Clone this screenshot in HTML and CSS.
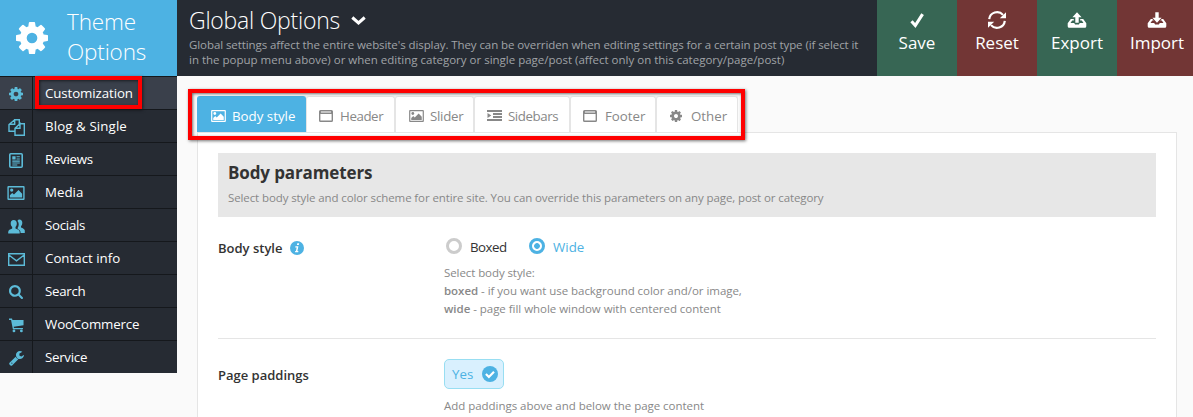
FILE: index.html
```html
<!DOCTYPE html>
<html lang="en">
<head>
<meta charset="utf-8">
<title>Theme Options</title>
<link rel="stylesheet" href="styles.css">
</head>
<body>
<svg class="defs" aria-hidden="true">
  <symbol id="cog" viewBox="128 128 1536 1536"><path d="M1152 896q0-106-75-181t-181-75-181 75-75 181 75 181 181 75 181-75 75-181zm512-109v222q0 12-8 23t-20 13l-185 28q-19 54-39 91 35 50 107 138 10 12 10 25t-9 23q-27 37-99 108t-94 71q-12 0-26-9l-138-108q-44 23-91 38-16 136-29 186-7 28-36 28h-222q-14 0-24.5-8.5t-11.5-21.5l-28-184q-49-16-90-37l-141 107q-10 9-25 9-14 0-25-11-126-114-165-168-7-10-7-23 0-12 8-23 15-21 51-66.5t54-70.5q-27-50-41-99l-183-27q-13-2-21-12.5t-8-23.5v-222q0-12 8-23t19-13l186-28q14-46 39-92-40-57-107-138-10-12-10-24 0-10 9-23 26-36 98.5-107.5t94.5-71.5q13 0 26 10l138 107q44-23 91-38 16-136 29-186 7-28 36-28h222q14 0 24.5 8.5t11.5 21.5l28 184q49 16 90 37l142-107q9-9 24-9 13 0 25 10 129 119 165 170 7 8 7 22 0 12-8 23-15 21-51 66.5t-54 70.5q26 50 41 98l183 28q13 2 21 12.5t8 23.5z"/></symbol>
  <symbol id="picture" viewBox="0 0 16 13"><path fill-rule="evenodd" d="M1 0h14a1 1 0 0 1 1 1v11a1 1 0 0 1-1 1H1a1 1 0 0 1-1-1V1a1 1 0 0 1 1-1zm.3 1.3v10.4h13.4V1.300z"/><circle cx="4" cy="3.800" r="1.500"/><path d="M2.300 10.700V8.600l2.200-2.100 1.600 1.500 4.200-4.200 3.400 3.500v3.400z"/></symbol>
  <symbol id="window" viewBox="0 0 14 12"><path fill-rule="evenodd" d="M1.500 0h11A1.500 1.500 0 0 1 14 1.500v9a1.500 1.500 0 0 1-1.500 1.500h-11A1.500 1.500 0 0 1 0 10.500v-9A1.500 1.500 0 0 1 1.500 0zM1.400 4v6.600h11.200V4zM2 1.500v1h10v-1z"/></symbol>
  <symbol id="indent" viewBox="0 0 15 11"><path d="M0 0h15v2H0zM6 3h9v2H6zM6 6h9v2H6zM0 9h15v2H0zM.5 3l3.800 2.500L.5 8z"/></symbol>
</svg>

<header class="topbar">
  <div class="brand">
    <svg class="brand-icon"><use href="#cog"/></svg>
    <div class="brand-name">Theme<br>Options</div>
  </div>
  <div class="heading">
    <h1>Global Options <svg class="chevron" viewBox="0 0 15 9"><path d="M1.300 1.500l6.200 5.400 6.200-5.400" fill="none" stroke="currentColor" stroke-width="3"/></svg></h1>
    <p><span class="snug">Global settings affect the entire website's display. They can be overriden when editing settings for a certain post type (if select it</span><br>in the popup menu above) or when editing category or single page/post (affect only on this category/page/post)</p>
  </div>
  <nav class="actions">
    <a class="action green"><svg viewBox="0 0 20 20"><path d="M4.500 11.300l3.800 4.200L15.600 4.200" fill="none" stroke="currentColor" stroke-width="3.100"/></svg><span>Save</span></a>
    <a class="action red"><svg viewBox="0 0 20 20"><path d="M2.200 9.200A7.900 7.900 0 0 1 16 4.900M17.800 10.800A7.900 7.900 0 0 1 4 15.100" fill="none" stroke="currentColor" stroke-width="2.200"/><path d="M19 2.200v6h-6.200zM1 17.800v-6h6.200z"/></svg><span>Reset</span></a>
    <a class="action green"><svg viewBox="0 0 20 20"><path d="M10 2.300l4.600 4.900h-2.900v5.500H8.300V7.200H5.400z"/><path d="M3.800 9h3v1.500H5.200L3.500 13h3.700l.9 1.600h3.800l.9-1.600h3.700l-1.700-2.500h-1.600V9h3l3.100 4.300v2.900a1.500 1.500 0 0 1-1.500 1.500H2.200a1.500 1.500 0 0 1-1.500-1.500v-2.900z"/></svg><span>Export</span></a>
    <a class="action red"><svg viewBox="0 0 20 20"><path d="M10 12.700l4.600-4.900h-2.900V2.300H8.300v5.500H5.400z"/><path d="M3.800 9h1.500l1.400 1.500H5.200L3.500 13h3.700l.9 1.600h3.800l.9-1.600h3.700l-1.700-2.500h-1.500L14.700 9h1.500l3.100 4.300v2.900a1.500 1.500 0 0 1-1.500 1.500H2.200a1.500 1.500 0 0 1-1.500-1.500v-2.900z"/></svg><span>Import</span></a>
  </nav>
</header>

<div class="body">
  <ul class="sidebar">
    <li class="current"><i><svg class="s14"><use href="#cog"/></svg></i><span class="tight-1">Customization</span><b class="mark"></b></li>
    <li><i><svg class="s17" viewBox="0 0 17 17"><path d="M6.700 4.200V.7h4.600v4.500M6.700.7L1 5.500v6.800h5.500M6.700.9v4.300H1.200M12 4.700h4.300V16.300H7V9.300l5-4.600v4.600H7.200M11.300 5V.7" fill="none" stroke="currentColor" stroke-width="1.400"/></svg></i><span class="loose">Blog &amp; Single</span></li>
    <li><i><svg class="s15" viewBox="0 0 14 15"><rect x=".8" y=".8" width="12.400" height="13.400" rx="1" fill="none" stroke="currentColor" stroke-width="1.600"/><path d="M3.300 3.200h3.300v3.300H3.300zM7.500 3.200h3.300v1H7.500zM7.500 5.400h3.300v1H7.500zM3.300 7.600h7.500v1.100H3.300zM3.300 9.600h7.500v1H3.300zM3.300 11.500h5v1h-5z"/></svg></i><span class="tight-3">Reviews</span></li>
    <li><i><svg class="pic18"><use href="#picture"/></svg></i><span>Media</span></li>
    <li><i><svg class="s17" viewBox="0 0 17 15"><path d="M11.300.5c2 0 3 1.300 3 3.200 0 1.500-.5 2.700-1.300 3.500v1.300c1.900.8 3.500 1.300 3.800 3.100V14h-4.200c0-2-.8-2.900-2.900-3.900V8.700c.6-.9 1-2 1-3.200 0-1.500-.4-2.600-1.200-3.600.4-.8 1-1.400 1.800-1.400z"/><path d="M5.700 1C7.800 1 8.800 2.400 8.800 4.400c0 1.500-.5 2.700-1.300 3.500v1.600c2.400 1 4.100 1.500 4.200 3.400V14.500H.2v-1.600c.1-1.900 1.800-2.400 4-3.400V7.900C3.300 7.100 2.700 5.900 2.700 4.400 2.700 2.400 3.600 1 5.700 1z"/></svg></i><span class="tight-3">Socials</span></li>
    <li><i><svg class="s17" viewBox="0 0 17 13"><path d="M.7.700h15.600v11.600H.7zM1.200 2.200l7.300 5.600 7.300-5.600" fill="none" stroke="currentColor" stroke-width="1.400"/></svg></i><span>Contact info</span></li>
    <li><i><svg class="s14" viewBox="64 128 1664 1664"><path d="M1216 832q0-185-131.500-316.500t-316.500-131.500-316.500 131.500-131.500 316.500 131.500 316.500 316.500 131.500 316.500-131.500 131.500-316.500zm512 832q0 52-38 90t-90 38q-54 0-90-38l-343-342q-179 124-399 124-143 0-273.500-55.500t-225-150-150-225-55.500-273.500 55.500-273.500 150-225 225-150 273.500-55.500 273.500 55.500 225 150 150 225 55.500 273.500q0 220-124 399l343 343q37 37 37 90z"/></svg></i><span class="tight-3">Search</span></li>
    <li><i><svg class="s16" viewBox="0 0 16 16"><path d="M0 .5h3.200l.5 1.700H15.500v5.600L5 9.300l.3 1.400h9.600V12H4.100L2.200 2H0z"/><circle cx="5.300" cy="13.800" r="1.500"/><circle cx="13.200" cy="13.800" r="1.500"/></svg></i><span class="tight-2">WooCommerce</span></li>
    <li><i><svg class="s16" viewBox="64 128 1664 1664"><path d="M448 1472q0-26-19-45t-45-19-45 19-19 45 19 45 45 19 45-19 19-45zm644-420l-682 682q-37 37-90 37-52 0-91-37l-106-108q-38-36-38-90 0-53 38-91l681-681q39 98 114.500 173.500t173.500 114.500zm634-435q0 39-23 106-47 134-164.500 217.500t-258.500 83.500q-185 0-316.500-131.500t-131.500-316.500 131.500-316.500 316.500-131.500q58 0 121.500 16.500t107.500 46.500q16 11 16 28t-16 28l-293 169v224l193 107q5-3 79-48.500t135.500-81 70.500-35.500q15 0 23.500 10t8.500 25z"/></svg></i><span class="tight-3">Service</span></li>
  </ul>

  <main class="content">
    <div class="tabs">
      <a class="tab active t-body"><svg class="pic15"><use href="#picture"/></svg><span>Body style</span></a>
      <a class="tab t-header"><svg class="win"><use href="#window"/></svg><span class="tight-4">Header</span></a>
      <a class="tab t-slider"><svg class="pic15"><use href="#picture"/></svg><span class="tight-3">Slider</span></a>
      <a class="tab t-sidebars"><svg class="ind"><use href="#indent"/></svg><span class="tight-4">Sidebars</span></a>
      <a class="tab t-footer"><svg class="win"><use href="#window"/></svg><span>Footer</span></a>
      <a class="tab t-other"><svg class="cog12"><use href="#cog"/></svg><span>Other</span></a>
      <b class="mark"></b>
    </div>
    <section class="panel">
      <div class="section-head">
        <h2>Body parameters</h2>
        <p>Select body style and color scheme for entire site. You can override this parameters on any page, post or category</p>
      </div>
      <div class="field first">
        <div class="label"><span>Body style</span><svg class="info" viewBox="0 0 14 14"><circle cx="7" cy="7" r="7"/><path d="M7.300 2.300h1.900l-.4 1.800H6.900zM5.400 5.300h3l-1 4.800h1l-.2 1.100H5l.2-1.100h.7l.8-3.700h-1.500z" fill="#fff"/></svg></div>
        <div class="value">
          <div class="radios">
            <label class="radio"><i></i><span class="tight-5">Boxed</span></label>
            <label class="radio on"><i></i><span>Wide</span></label>
          </div>
          <p class="help"><span class="snug">Select body style:</span><br><b>boxed</b> - if you want use background color and/or image,<br><b>wide</b> - page fill whole window with centered content</p>
        </div>
      </div>
      <div class="field second">
        <div class="label"><span>Page paddings</span></div>
        <div class="value">
          <div class="switch"><span>Yes</span><svg viewBox="0 0 16 16"><circle cx="8" cy="8" r="8"/><path d="M3.900 8l3 3L12 5.800" fill="none" stroke="#fff" stroke-width="2.200"/></svg></div>
          <p class="help">Add paddings above and below the page content</p>
        </div>
      </div>
    </section>
  </main>
</div>
</body>
</html>
```
FILE: styles.css
```css
* { box-sizing: border-box; }
html, body { margin: 0; height: 417px; overflow: hidden; }
body {
  background: #fafafa;
  font-family: "Open Sans", "Noto Sans", sans-serif;
  font-size: 13.3px;
  color: #333;
}
h1, h2, p, ul { margin: 0; padding: 0; font-weight: normal; }
svg { display: block; flex: none; fill: currentColor; }
.defs { position: absolute; width: 0; height: 0; }

.loose { letter-spacing: .1px; }
.snug { letter-spacing: -.082px; }
.tight-1 { letter-spacing: -.1px; }
.tight-2 { letter-spacing: -.15px; }
.tight-3 { letter-spacing: -.28px; }
.tight-4 { letter-spacing: -.42px; }
.tight-5 { letter-spacing: -.5px; }

.topbar { display: flex; height: 76px; background: #262b33; }
.brand {
  display: flex; align-items: center; width: 177px; flex: none;
  background: #4db2e3; color: #fff; padding-left: 16px; gap: 19px;
}
.brand-icon { width: 32px; height: 32px; }
.brand-name { font-size: 22.5px; line-height: 30px; font-weight: 300; padding-bottom: 2px; letter-spacing: -.15px; }
.heading { flex: 1; padding: 6px 0 0 12px; }
.heading h1 {
  display: flex; align-items: center; gap: 11px;
  font-size: 23px; line-height: 29px; font-weight: 300; color: #fff; letter-spacing: -.24px;
}
.chevron { width: 15px; height: 9px; }
.heading p { margin-top: 2px; font-size: 11.5px; line-height: 15px; color: #a0a3a7; white-space: nowrap; }
.actions { display: flex; flex: none; width: 316px; overflow: hidden; }
.action {
  display: flex; flex-direction: column; align-items: center; flex: none;
  width: 80px; padding-top: 10px; color: #fff; font-size: 17px; line-height: 25px;
}
.action svg { width: 20px; height: 20px; }
.green { background: #376654; }
.red { background: #723635; }

.body { display: flex; align-items: flex-start; height: 341px; }
.sidebar { width: 177px; flex: none; list-style: none; background: #262b33; color: #fff; }
.sidebar li { position: relative; display: flex; height: 33px; border-top: 1px solid #15181c; line-height: 32px; }
.sidebar li i {
  display: flex; align-items: center; justify-content: center;
  width: 33px; padding-top: 2px; border-right: 1px solid #15181c; color: #5cbbd8; margin-right: 12px;
}
.sidebar .current { background: #3a404b; }
.s14 { width: 14px; height: 14px; }
.s15 { width: 14px; height: 15px; }
.s16 { width: 15px; height: 15px; }
.s17 { width: 17px; height: 17px; }
.pic18 { width: 18px; height: 14px; }
.mark { position: absolute; border: 4px solid #fe0000; box-shadow: 1px 1px 3px rgba(0,0,0,.55), inset 1px 1px 3px rgba(0,0,0,.55); }
.sidebar .mark { left: 35px; top: -1px; width: 107px; height: 33px; }

.content { flex: 1; padding: 20px 16px 0 20px; height: 341px; overflow: hidden; }
.tabs { position: relative; display: flex; width: 541px; height: 36px; background: #f3f3f3; }
.tab {
  display: flex; align-items: center; height: 36px; padding: 2px 0 0 12px;
  background: #fff; border: 1px solid #e5e5e5; border-bottom: 0; border-radius: 3px 3px 0 0;
  color: #888; gap: 6px;
}
.tab.active { background: #4db2e3; border-color: #4db2e3; color: #fff; }
.tab.t-body, .tab.t-slider { padding-left: 13px; }
.t-body { width: 109px; } .t-header { width: 89px; } .t-slider { width: 79px; }
.t-sidebars { width: 96px; } .t-footer { width: 86px; } .t-other { width: 82px; }
.pic15 { width: 15px; height: 12px; }
.win { width: 14px; height: 12px; margin-right: 1px; }
.t-footer .win { margin-right: 2px; }
.ind { width: 15px; height: 11px; }
.cog12 { width: 12px; height: 12px; margin: 0 3px 0 1px; }
.tabs .mark { left: -9px; top: -7px; width: 557px; height: 51px; }

.panel { width: 980px; height: 320px; background: #fff; border: 1px solid #e5e5e5; padding: 20px 20px 0; }
.section-head { height: 64px; background: #e7e7e7; padding: 7px 10px 0; }
.section-head h2 { font-size: 17px; line-height: 26px; font-weight: 700; color: #333; letter-spacing: -.12px; }
.section-head p { font-size: 11.5px; line-height: 18px; margin-top: 3px; color: #888; white-space: nowrap; letter-spacing: -.108px; }
.field { display: flex; height: 121px; border-bottom: 1px solid #e5e5e5; padding-top: 20px; }
.field.first { height: 122px; }
.label { display: flex; align-items: flex-start; width: 226px; flex: none; gap: 8px; padding-top: 1px; line-height: 20px; font-weight: 600; font-size: 13px; color: #333; }
.second .label { padding-top: 6px; }
.info { width: 14px; height: 14px; margin-top: 3px; color: #4db2e3; }
.radios { display: flex; line-height: 20px; }
.radio { display: flex; align-items: center; width: 83px; padding-left: 2px; gap: 8px; }
.radio i { width: 16px; height: 16px; border: 3px solid #ccc; border-radius: 50%; margin-top: -2px; }
.radio.on { color: #4db2e3; }
.radio.on i { border-color: #4db2e3; background: radial-gradient(circle, #4db2e3 2.5px, #fff 3.2px); }
.help { font-size: 11.5px; line-height: 18px; margin-top: 7px; color: #888; white-space: nowrap; letter-spacing: -.035px; }
.second .help { margin-top: 8px; }
.help b { font-weight: 600; }
.switch {
  display: flex; align-items: center; justify-content: space-between; width: 60px; height: 30px;
  padding: 0 5px 0 7px; background: #d9f0fe; border: 1px solid #98def2; border-radius: 5px; color: #4db2e3;
}
.switch svg { width: 16px; height: 16px; margin-top: -1px; }
```
